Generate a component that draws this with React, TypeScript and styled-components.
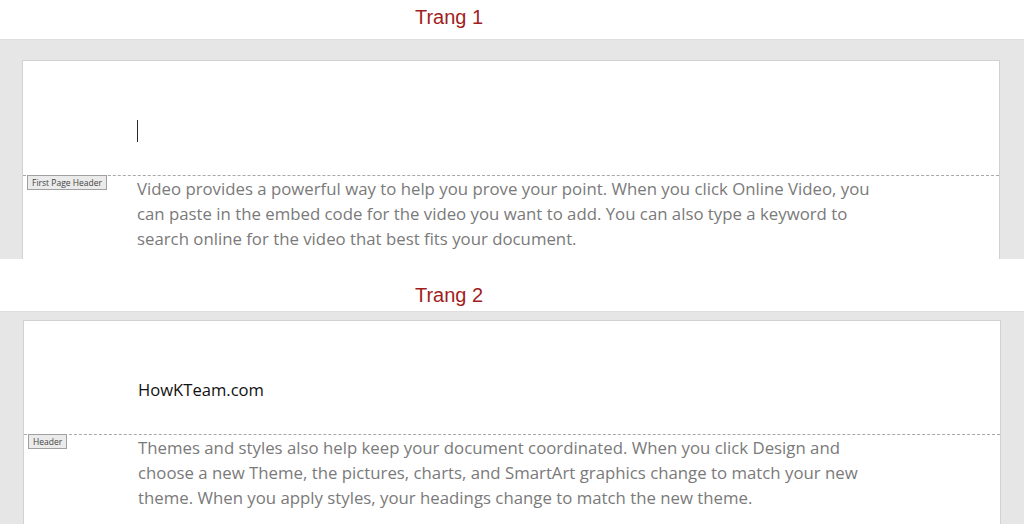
import React from 'react';
import styled, { createGlobalStyle } from 'styled-components';

const GlobalStyle = createGlobalStyle`
  html, body {
    margin: 0;
    padding: 0;
    background: #ffffff;
    width: 1024px;
    height: 524px;
    overflow: hidden;
  }
`;

const Screen = styled.div`
  width: 1024px;
  height: 524px;
  display: flex;
  flex-direction: column;
  background: #ffffff;
`;

const Caption = styled.div<{ $height: number; $pad: number }>`
  height: ${(p) => p.$height}px;
  padding-top: ${(p) => p.$pad}px;
  box-sizing: border-box;
  display: flex;
  justify-content: center;
  padding-right: 126px;
  font-family: 'Liberation Sans', Arial, sans-serif;
  font-size: 20px;
  line-height: 24px;
  color: #a01e1e;
`;

const Band = styled.div<{ $top: number; $left: number; $height: number }>`
  height: ${(p) => p.$height}px;
  background: #e6e6e6;
  padding: ${(p) => p.$top}px 0 0 ${(p) => p.$left}px;
  box-sizing: border-box;
  border-top: 1px solid #dedede;
  display: flex;
  flex-direction: column;
`;

const Sheet = styled.div`
  width: 978px;
  flex: 1;
  background: #ffffff;
  border: 1px solid #d2d2d2;
  border-bottom: none;
  box-sizing: border-box;
  display: flex;
  flex-direction: column;
`;

const HeaderArea = styled.div<{ $height: number }>`
  height: ${(p) => p.$height}px;
  flex-shrink: 0;
  padding-left: 114px;
  box-sizing: border-box;
  position: relative;
`;

const Caret = styled.div`
  position: absolute;
  left: 114px;
  top: 59px;
  width: 1px;
  height: 22px;
  background: #2a2a2a;
`;

const SiteName = styled.div`
  padding-top: 58px;
  font-family: 'Open Sans', 'Noto Sans', sans-serif;
  font-size: 16.6px;
  line-height: 22px;
  color: #111111;
`;

const Divider = styled.div`
  position: relative;
  border-top: 1px dashed #a8a8a8;
  flex-shrink: 0;
`;

const Tag = styled.span`
  position: absolute;
  left: 4px;
  top: -1px;
  height: 15px;
  padding: 0 4px;
  box-sizing: border-box;
  background: #ebebeb;
  border: 1px solid #a0a0a0;
  font-family: 'Open Sans', 'Noto Sans', sans-serif;
  font-size: 8.5px;
  line-height: 13px;
  color: #444444;
  white-space: nowrap;
`;

const Body = styled.div`
  padding-left: 114px;
  font-family: 'Open Sans', 'Noto Sans', sans-serif;
  font-size: 16.8px;
  line-height: 25px;
  color: #7a7a7a;
`;

const Line = styled.div`
  white-space: nowrap;
`;

const pages = [
  {
    caption: 'Trang 1',
    captionHeight: 39,
    captionPad: 5,
    bandHeight: 220,
    bandTop: 20,
    bandLeft: 22,
    headerHeight: 114,
    tag: 'First Page Header',
    site: null as string | null,
    lines: [
      'Video provides a powerful way to help you prove your point. When you click Online Video, you',
      'can paste in the embed code for the video you want to add. You can also type a keyword to',
      'search online for the video that best fits your document.',
    ],
  },
  {
    caption: 'Trang 2',
    captionHeight: 52,
    captionPad: 24,
    bandHeight: 213,
    bandTop: 8,
    bandLeft: 23,
    headerHeight: 113,
    tag: 'Header',
    site: 'HowKTeam.com',
    lines: [
      'Themes and styles also help keep your document coordinated. When you click Design and',
      'choose a new Theme, the pictures, charts, and SmartArt graphics change to match your new',
      'theme. When you apply styles, your headings change to match the new theme.',
    ],
  },
];

export default function App() {
  return (
    <Screen>
      <GlobalStyle />
      {pages.map((p) => (
        <React.Fragment key={p.caption}>
          <Caption $height={p.captionHeight} $pad={p.captionPad}>{p.caption}</Caption>
          <Band $top={p.bandTop} $left={p.bandLeft} $height={p.bandHeight}>
            <Sheet>
              <HeaderArea $height={p.headerHeight}>
                {p.site ? <SiteName>{p.site}</SiteName> : <Caret />}
              </HeaderArea>
              <Divider>
                <Tag>{p.tag}</Tag>
              </Divider>
              <Body>
                {p.lines.map((l) => (
                  <Line key={l}>{l}</Line>
                ))}
              </Body>
            </Sheet>
          </Band>
        </React.Fragment>
      ))}
    </Screen>
  );
}
